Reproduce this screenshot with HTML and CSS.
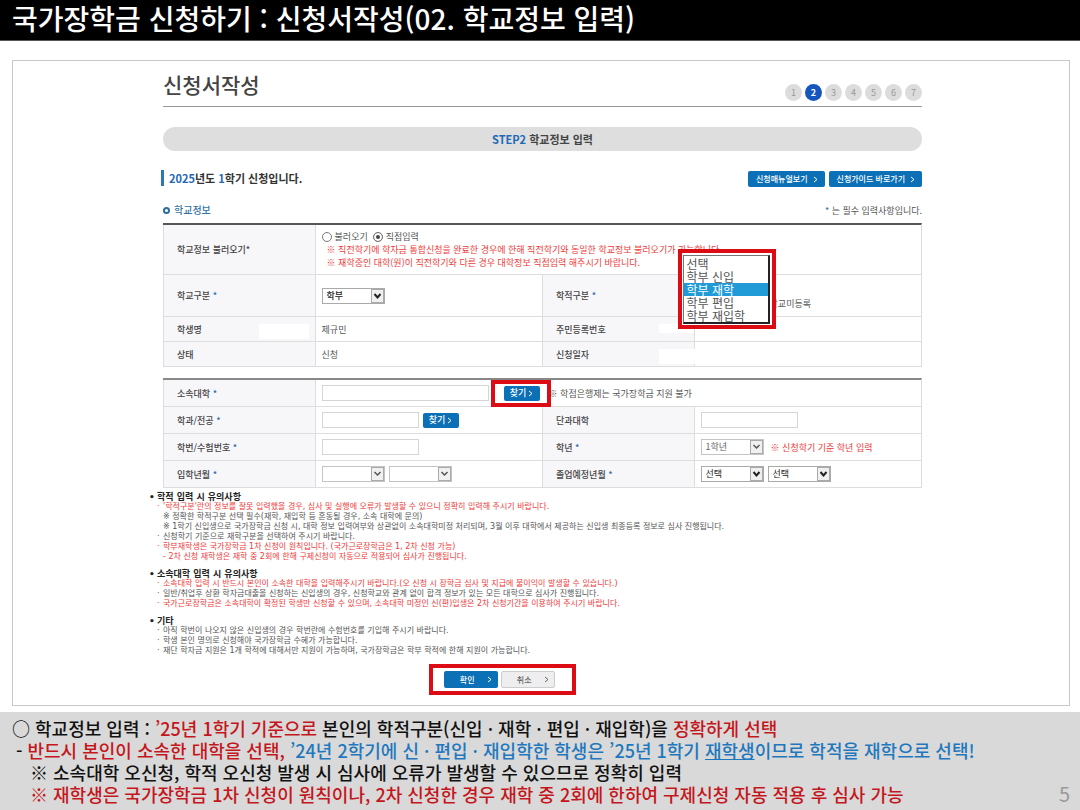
FILE: index.html
```html
<!DOCTYPE html>
<html lang="ko">
<head>
  <meta charset="UTF-8">
  <meta name="viewport" content="width=device-width, initial-scale=1.0">
  <title>국가장학금 신청하기</title>
  <link rel="stylesheet" href="styles.css">
</head>
<body>

  <header class="header">국가장학금 신청하기 : 신청서작성(02. 학교정보 입력)</header>

  <main class="panel">
    <!-- Title and steps -->
    <div class="title-row">
      <h1>신청서작성</h1>
      <ol class="steps">
        <li>1</li>
        <li class="active">2</li>
        <li>3</li>
        <li>4</li>
        <li>5</li>
        <li>6</li>
        <li>7</li>
      </ol>
    </div>
    <div class="step-bar"><span class="blue">STEP2</span> 학교정보 입력</div>

    <div class="term-row">
      <h2><span class="blue">2025</span>년도 <span class="blue">1</span>학기 신청입니다.</h2>
      <div class="links">
        <button type="button" class="btn">신청매뉴얼보기 <svg class="arrow" viewBox="0 0 5 7"><path d="M1 1l3 2.5L1 6"/></svg></button>
        <button type="button" class="btn">신청가이드 바로가기 <svg class="arrow" viewBox="0 0 5 7"><path d="M1 1l3 2.5L1 6"/></svg></button>
      </div>
    </div>

    <div class="section-row">
      <h3>학교정보</h3>
      <p><span class="req">*</span> 는 필수 입력사항입니다.</p>
    </div>

    <form id="school-form">
      <!-- School info -->
      <table class="form-table">
        <colgroup><col class="col-th"><col class="col-td"><col class="col-th"><col class="col-td"></colgroup>
        <tr>
          <th>학교정보 불러오기*</th>
          <td colspan="3" class="load-cell">
            <div class="radios">
              <label><input type="radio" name="load"> 불러오기</label>
              <label><input type="radio" name="load" checked> 직접입력</label>
            </div>
            <p class="warn">※ 직전학기에 학자금 통합신청을 완료한 경우에 한해 직전학기와 동일한 학교정보 불러오기가 가능합니다.</p>
            <p class="warn">※ 재학중인 대학(원)이 직전학기와 다른 경우 대학정보 직접입력 해주시기 바랍니다.</p>
          </td>
        </tr>
        <tr class="tall">
          <th><label for="school-type">학교구분 <span class="req">*</span></label></th>
          <td><select id="school-type" class="strong"><option>학부</option></select></td>
          <th><label for="status">학적구분 <span class="req">*</span></label></th>
          <td class="status-cell">
            <p class="unregistered">학교미등록</p>
            <div class="popup">
              <select id="status" size="5">
                <option>선택</option>
                <option>학부 신입</option>
                <option selected>학부 재학</option>
                <option>학부 편입</option>
                <option>학부 재입학</option>
              </select>
            </div>
          </td>
        </tr>
        <tr class="short">
          <th>학생명<span class="mask"></span></th>
          <td>제규민</td>
          <th>주민등록번호<span class="mask mask-top"></span></th>
          <td></td>
        </tr>
        <tr class="short">
          <th>상태</th>
          <td>신청</td>
          <th>신청일자<span class="mask mask-over"></span></th>
          <td></td>
        </tr>
      </table>

      <!-- University -->
      <table class="form-table second">
        <colgroup><col class="col-th"><col class="col-td"><col class="col-th"><col class="col-td"></colgroup>
        <tr>
          <th><label for="univ">소속대학 <span class="req">*</span></label></th>
          <td colspan="3">
            <div class="field">
              <input type="text" id="univ" class="wide">
              <span class="marked"><button type="button" class="btn find">찾기 <svg class="arrow" viewBox="0 0 5 7"><path d="M1 1l3 2.5L1 6"/></svg></button></span>
              <span>※ 학점은행제는 국가장학금 지원 불가</span>
            </div>
          </td>
        </tr>
        <tr>
          <th><label for="major">학과/전공 <span class="req">*</span></label></th>
          <td>
            <div class="field">
              <input type="text" id="major">
              <button type="button" class="btn find">찾기 <svg class="arrow" viewBox="0 0 5 7"><path d="M1 1l3 2.5L1 6"/></svg></button>
            </div>
          </td>
          <th><label for="college">단과대학</label></th>
          <td><div class="field"><input type="text" id="college"></div></td>
        </tr>
        <tr>
          <th><label for="student-no">학번/수험번호 <span class="req">*</span></label></th>
          <td><div class="field"><input type="text" id="student-no"></div></td>
          <th><label for="grade">학년 <span class="req">*</span></label></th>
          <td>
            <div class="field">
              <select id="grade" class="light"><option>1학년</option></select>
              <span class="warn">※ 신청학기 기준 학년 입력</span>
            </div>
          </td>
        </tr>
        <tr>
          <th><label for="enter-year">입학년월 <span class="req">*</span></label></th>
          <td>
            <div class="field">
              <select id="enter-year" class="light"><option></option></select>
              <select class="light" aria-label="입학월"><option></option></select>
            </div>
          </td>
          <th><label for="grad-year">졸업예정년월 <span class="req">*</span></label></th>
          <td>
            <div class="field">
              <select id="grad-year"><option>선택</option></select>
              <select aria-label="졸업예정월"><option>선택</option></select>
            </div>
          </td>
        </tr>
      </table>

      <!-- Notes -->
      <div class="notes">
        <h4>학적 입력 시 유의사항</h4>
        <ul>
          <li class="warn">'학적구분'란의 정보를 잘못 입력했을 경우, 심사 및 실행에 오류가 발생할 수 있으니 정확히 입력해 주시기 바랍니다.</li>
          <li class="plain">※ 정확한 학적구분 선택 필수(재학, 재입학 등 혼동될 경우, 소속 대학에 문의)</li>
          <li class="plain">※ 1학기 신입생으로 국가장학금 신청 시, 대학 정보 입력여부와 상관없이 소속대학미정 처리되며, 3월 이후 대학에서 제공하는 신입생 최종등록 정보로 심사 진행됩니다.</li>
          <li>신청학기 기준으로 재학구분을 선택하여 주시기 바랍니다.</li>
          <li class="warn">학부재학생은 국가장학금 1차 신청이 원칙입니다. (국가근로장학금은 1, 2차 신청 가능)</li>
          <li class="plain warn">- 2차 신청 재학생은 재학 중 2회에 한해 구제신청이 자동으로 적용되어 심사가 진행됩니다.</li>
        </ul>
        <h4>소속대학 입력 시 유의사항</h4>
        <ul>
          <li class="warn">소속대학 입력 시 반드시 본인이 소속한 대학을 입력해주시기 바랍니다.(오 신청 시 장학금 심사 및 지급에 불이익이 발생할 수 있습니다.)</li>
          <li>일반/취업후 상환 학자금대출을 신청하는 신입생의 경우, 신청학교와 관계 없이 합격 정보가 있는 모든 대학으로 심사가 진행됩니다.</li>
          <li class="warn">국가근로장학금은 소속대학이 확정된 학생만 신청할 수 있으며, 소속대학 미정인 신(편)입생은 2차 신청기간을 이용하여 주시기 바랍니다.</li>
        </ul>
        <h4>기타</h4>
        <ul>
          <li>아직 학번이 나오지 않은 신입생의 경우 학번란에 수험번호를 기입해 주시기 바랍니다.</li>
          <li>학생 본인 명의로 신청해야 국가장학금 수혜가 가능합니다.</li>
          <li>재단 학자금 지원은 1개 학적에 대해서만 지원이 가능하며, 국가장학금은 학부 학적에 한해 지원이 가능합니다.</li>
        </ul>
      </div>

      <div class="actions">
        <button type="submit" class="btn action">확인 <svg class="arrow" viewBox="0 0 5 7"><path d="M1 1l3 2.5L1 6"/></svg></button>
        <button type="button" class="btn action cancel">취소 <svg class="arrow" viewBox="0 0 5 7"><path d="M1 1l3 2.5L1 6"/></svg></button>
      </div>
    </form>
  </main>

  <footer class="footer">
    <div class="guide">
      <p>○ 학교정보 입력 : <span class="red">’25년 1학기 기준으로</span> 본인의 학적구분(신입 · 재학 · 편입 · 재입학)을 <span class="red">정확하게 선택</span></p>
      <p class="dash">- <span class="red">반드시 본인이 소속한 대학을 선택,</span> <span class="sky">’24년 2학기에 신 · 편입 · 재입학한 학생은 ’25년 1학기 <u>재학생</u>이므로 학적을 재학으로 선택!</span></p>
      <p class="sub">※ 소속대학 오신청, 학적 오신청 발생 시 심사에 오류가 발생할 수 있으므로 정확히 입력</p>
      <p class="sub red">※ 재학생은 국가장학금 1차 신청이 원칙이나, 2차 신청한 경우 재학 중 2회에 한하여 구제신청 자동 적용 후 심사 가능</p>
    </div>
    <span class="page-no">5</span>
  </footer>

</body>
</html>
```

FILE: styles.css
```css
*, *::before, *::after {
  box-sizing: border-box;
}
body {
  display: flex;
  flex-direction: column;
  min-height: 100vh;
  margin: 0;
  background: #ffffff;
  color: #555555;
  font-family: "Noto Sans CJK KR", sans-serif;
  font-size: 9px;
  line-height: 13px;
}
h1, h2, h3, h4, p, ul, ol {
  margin: 0;
  padding: 0;
}
ul, ol {
  list-style: none;
}
button, input, select {
  margin: 0;
  font-family: inherit;
}
.header {
  height: 41px;
  padding: 0 12px;
  background: #000000;
  border-bottom: 1px solid #555555;
  color: #ffffff;
  font-size: 28px;
  font-weight: 500;
  line-height: 37px;
}
.panel {
  flex: 1;
  margin: 19px 10px 6px 12px;
  padding: 8px 147px 8px 150px;
  border: 1px solid #c8c8c8;
}

/* Title */
.title-row {
  display: flex;
  justify-content: space-between;
  align-items: flex-end;
  border-bottom: 1px solid #999999;
}
h1 {
  margin-bottom: 7px;
  color: #444444;
  font-size: 21px;
  font-weight: 500;
  line-height: 30px;
}
.steps {
  display: flex;
  gap: 3px;
  margin-bottom: 5px;
}
.steps li {
  width: 17px;
  height: 17px;
  border-radius: 50%;
  background: #dcdcdc;
  color: #999999;
  line-height: 17px;
  text-align: center;
}
.steps .active {
  background: #1556bd;
  color: #ffffff;
  font-weight: bold;
}
.step-bar {
  margin-top: 20px;
  border-radius: 12px;
  background: #dedede;
  color: #444444;
  font-size: 11px;
  font-weight: bold;
  line-height: 24px;
  text-align: center;
}
.blue {
  color: #2468b8;
}
.term-row {
  display: flex;
  justify-content: space-between;
  align-items: center;
  margin-top: 18px;
}
h2 {
  margin-left: -2px;
  padding-left: 5px;
  border-left: 3px solid #2f78b0;
  color: #333333;
  font-size: 11px;
  font-weight: bold;
  line-height: 16px;
}
.links {
  display: flex;
  gap: 4px;
  margin-top: 2px;
}
.btn {
  display: flex;
  justify-content: center;
  align-items: center;
  gap: 5px;
  height: 16px;
  padding: 0 7px 0 8px;
  border: none;
  border-radius: 2px;
  background: #0b70b5;
  color: #ffffff;
  font-size: 8px;
  font-weight: 500;
  line-height: 14px;
  white-space: nowrap;
  cursor: pointer;
}
.arrow {
  width: 5px;
  height: 7px;
  fill: none;
  stroke: currentColor;
}
.section-row {
  display: flex;
  justify-content: space-between;
  align-items: center;
  margin: 16px 0 6px;
}
h3 {
  display: flex;
  align-items: center;
  gap: 4px;
  color: #3573a3;
  font-size: 10px;
  font-weight: 500;
  line-height: 14px;
}
h3::before {
  content: "";
  width: 7px;
  height: 7px;
  border: 2px solid #2b6d9e;
  border-radius: 50%;
}
.req {
  color: #2c6aa8;
}
.warn {
  color: #ee3b3b;
}

/* Tables */
.form-table {
  width: 100%;
  table-layout: fixed;
  border-top: 2px solid #555555;
  border-right: 1px solid #dddddd;
  border-spacing: 0;
}
.second {
  margin-top: 11px;
  border-top-color: #888888;
}
.col-th {
  width: 20%;
}
.col-td {
  width: 30%;
}
.form-table th, .form-table td {
  position: relative;
  height: 27px;
  padding: 0 0 0 6px;
  border-bottom: 1px solid #dddddd;
  border-left: 1px solid #dddddd;
  text-align: left;
}
.form-table th {
  padding-left: 13px;
  background: #f7f7fa;
  color: #444444;
  font-weight: 500;
}
.form-table .load-cell {
  padding: 5px 0 5px 6px;
}
.load-cell .warn {
  padding-left: 5px;
}
.form-table .tall > * {
  height: 42px;
}
.form-table .short > * {
  height: 25px;
}
.radios {
  display: flex;
  gap: 5px;
}
.radios label {
  display: flex;
  align-items: center;
  gap: 3px;
}
input[type="radio"] {
  appearance: none;
  width: 10px;
  height: 10px;
  border: 1px solid #777777;
  border-radius: 50%;
  background: #ffffff;
}
input[type="radio"]:checked {
  background: #444444;
  box-shadow: inset 0 0 0 2px #ffffff;
}
.field {
  display: flex;
  align-items: center;
  gap: 4px;
}
input[type="text"] {
  width: 97px;
  height: 16px;
  padding: 0 4px;
  border: 1px solid #d5d5d5;
  background: #ffffff;
  font-size: 9px;
}
input.wide {
  width: 167px;
}
.find {
  width: 36px;
  height: 15px;
  padding: 0;
  gap: 2px;
  font-size: 9px;
}
select {
  appearance: none;
  width: 63px;
  height: 16px;
  padding: 0 4px;
  border: 1px solid #aaaaaa;
  border-radius: 0;
  background: #ffffff url("data:image/svg+xml,%3Csvg xmlns='http://www.w3.org/2000/svg' width='13' height='14'%3E%3Crect x='.5' y='.5' width='12' height='13' fill='%23f0f0f0' stroke='%23aaa'/%3E%3Cpath d='M3.5 5l3 3.5 3-3.5' fill='none' stroke='%23222' stroke-width='2'/%3E%3C/svg%3E") no-repeat right center;
  color: #222222;
  font-size: 9px;
  line-height: 14px;
}
.strong {
  display: block;
  font-weight: 500;
}
.light {
  border-color: #c4c4c4;
  background-image: url("data:image/svg+xml,%3Csvg xmlns='http://www.w3.org/2000/svg' width='13' height='14'%3E%3Crect x='.5' y='.5' width='12' height='13' fill='%23f0f0f0' stroke='%23aaa'/%3E%3Cpath d='M3.5 5l3 3 3-3' fill='none' stroke='%23555' stroke-width='1.5'/%3E%3C/svg%3E");
  color: #666666;
}
.field .warn {
  margin-left: 3px;
}
.unregistered {
  margin: 16px 0 0 69px;
}

/* Red frames */
.popup {
  position: absolute;
  top: -26px;
  left: -17px;
  z-index: 2;
  width: 98px;
  padding: 2px 2px 1px 1px;
  border: 4px solid #dc0c14;
  background: #ffffff;
}
.popup select {
  display: block;
  width: 100%;
  height: 69px;
  padding: 1px 0;
  overflow: hidden;
  border: 1px solid #777777;
  border-right: 2px solid #222222;
  border-bottom: 2px solid #222222;
  background: #ffffff;
}
.popup option {
  display: flex;
  align-items: center;
  height: 13px;
  min-height: 0;
  padding: 0 3px;
  color: #555555;
  font-size: 12px;
}
.popup option:checked {
  background: #219bd8 linear-gradient(#219bd8, #219bd8);
  color: #ffffff;
}
.marked {
  position: relative;
  margin: 0 5px 0 11px;
}
.marked::after {
  content: "";
  position: absolute;
  top: -6px;
  right: -11px;
  bottom: -6px;
  left: -13px;
  border: 4px solid #dc0c14;
  pointer-events: none;
}
.mask {
  position: absolute;
  top: 7px;
  right: 6px;
  width: 50px;
  height: 15px;
  background: #ffffff;
}
.mask-top {
  right: -1px;
  width: 36px;
  height: 9px;
}
.mask-over {
  z-index: 1;
  right: -1px;
  width: 36px;
}

/* Notes */
.notes {
  margin: 5px 0 0 -14px;
  font-family: "DejaVu Sans", "Noto Sans CJK KR", sans-serif;
  font-size: 8px;
  line-height: 10px;
}
h4 {
  margin-bottom: 1px;
  color: #222222;
  font-size: 9px;
  line-height: 8px;
}
h4::before {
  content: "•";
  display: inline-block;
  width: 8px;
}
.notes ul {
  margin-bottom: 8px;
  padding-left: 8px;
}
.notes li {
  padding-left: 6px;
  text-indent: -6px;
}
.notes li::before {
  content: "·";
  display: inline-block;
  width: 6px;
  text-indent: 0;
}
.notes .plain {
  text-indent: 0;
}
.notes .plain::before {
  content: none;
}
.actions {
  display: flex;
  gap: 3px;
  width: 147px;
  margin: 0 0 0 35%;
  padding: 3px 0 3px 11px;
  border: 4px solid #dc0c14;
}
.action {
  width: 54px;
  height: 17px;
  padding: 0 0 0 10px;
  gap: 12px;
}
.cancel {
  border: 1px solid #cccccc;
  background: #eeeeee;
  color: #666666;
}

/* Guide */
.footer {
  display: flex;
  justify-content: space-between;
  align-items: flex-end;
  padding: 5px 10px 5px 12px;
  background: #d9d9d9;
  color: #111111;
  font-size: 18px;
  font-weight: 500;
  line-height: 22px;
}
.dash {
  padding-left: 4px;
}
.sub {
  padding-left: 18px;
}
.red {
  color: #c4161c;
}
.sky {
  color: #1f78be;
}
.page-no {
  color: #999999;
  font-size: 20px;
  font-weight: normal;
}
```
